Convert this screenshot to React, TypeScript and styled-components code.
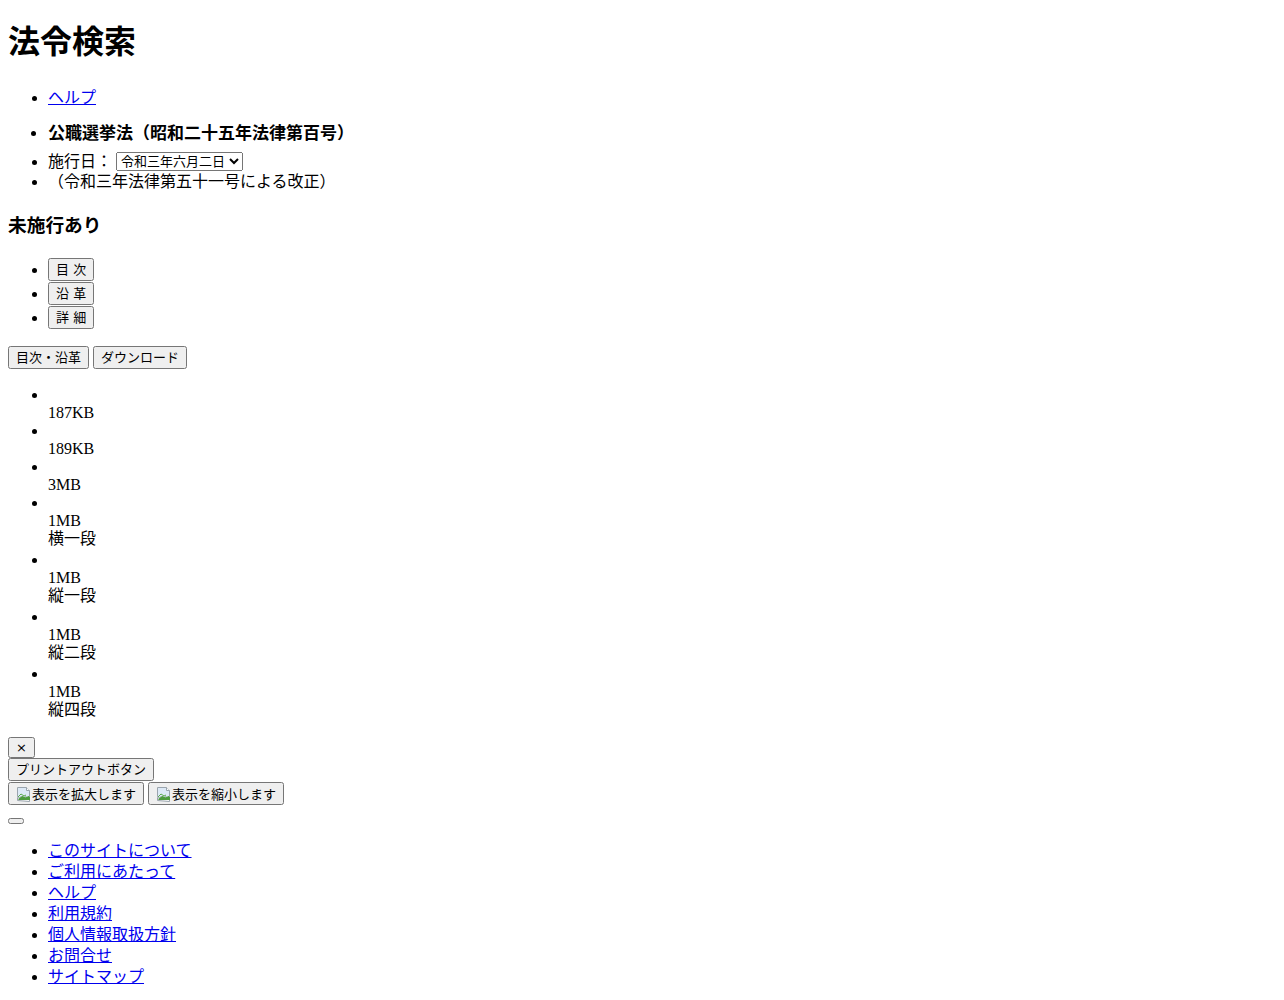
import styled, { createGlobalStyle } from "styled-components";

const GlobalStyle = createGlobalStyle`
  body {
    margin: 8px;
    background: #fff;
    color: #000;
    font-family: "Liberation Serif", "Noto Sans CJK JP", serif;
    font-size: 16px;
    line-height: 21px;
    text-spacing-trim: space-all;
  }
  button, select {
    font-family: "DejaVu Sans", "Noto Sans CJK JP", sans-serif;
    font-size: 13px;
    text-spacing-trim: space-all;
  }
`

const Title = styled.h1`
  font-size: 2em;
  line-height: 22px;
  margin: 23.44px 0 0;
`
const List = styled.ul<{ $top?: number; $bottom?: number }>`
  margin: ${(p) => p.$top ?? 16}px 0 ${(p) => p.$bottom ?? 16}px;
  padding-left: 40px;
`
const Link = styled.a`
  color: #0000ee;
  text-decoration: underline;
`
const LawName = styled.li`
  font-weight: bold;
  font-size: 17px;
  padding-top: 1px;
  margin-bottom: 7px;
`
const DateItem = styled.li`
  height: 20px;
`
const DateSelect = styled.select`
  height: 19px;
  vertical-align: middle;
  margin-bottom: 4px;
`
const Notice = styled.h3`
  font-size: 1.17em;
  line-height: 22px;
  margin: 23px 0 21px;
`
const TabItem = styled.li`
  height: 24px;
  line-height: 24px;
`
const ToolButton = styled.button<{ $height?: number }>`
  height: ${(p) => p.$height ?? 23}px;
  line-height: 15px;
  padding: 1px 6px;
  vertical-align: top;
`
const ButtonRow = styled.div<{ $height?: number; $top?: number }>`
  display: flex;
  align-items: flex-start;
  gap: 4px;
  height: ${(p) => p.$height ?? 24}px;
  margin-top: ${(p) => p.$top ?? 0}px;
`
const FileItem = styled.li`
  line-height: 18px;
`
const FileIcon = styled.a`
  display: inline-block;
  width: 0;
  height: 14px;
`
const FileLine = styled.div<{ $cjk?: boolean }>`
  line-height: ${(p) => (p.$cjk ? 17 : 18)}px;
  padding-bottom: ${(p) => (p.$cjk ? 4 : 0)}px;
`
const ZoomButton = styled.button`
  display: inline-flex;
  align-items: center;
  height: 23px;
  padding: 1px 6px;
`
const EmptyButton = styled.button`
  height: 6px;
  width: 16px;
  padding: 0;
`

const BrokenImage = () => (
  <svg width="16" height="16" viewBox="0 0 16 16">
    <path d="M1.5 1.5h9l3 3v6l-2 1-2-1-2 1.5-2-1.5-2 1-2-1z" fill="#dde9f6" stroke="#9aa4ad" />
    <path d="M10.5 1.5v3h3" fill="#fff" stroke="#9aa4ad" />
    <path d="M1.5 14.5v-3l2 1 2-1 2 1.5 2-1.5 2 1 2-1v4z" fill="#fff" stroke="#9aa4ad" />
    <path d="M2 14l1.5-2 3-2 3 1.5 3-1.5 1.5 1v3z" fill="#4c9b3c" />
    <path d="M2 11l3-3 3 2 2-1" fill="none" stroke="#5aa84a" />
  </svg>
)

const files = [
  { size: "187KB" },
  { size: "189KB" },
  { size: "3MB" },
  { size: "1MB", label: "横一段" },
  { size: "1MB", label: "縦一段" },
  { size: "1MB", label: "縦二段" },
  { size: "1MB", label: "縦四段" },
]

const footerLinks = [
  "このサイトについて",
  "ご利用にあたって",
  "ヘルプ",
  "利用規約",
  "個人情報取扱方針",
  "お問合せ",
  "サイトマップ",
]

export default function App() {
  return (
    <>
      <GlobalStyle />
      <Title>法令検索</Title>
      <List $top={34} $bottom={14}>
        <li><Link href="#">ヘルプ</Link></li>
      </List>
      <List $top={0} $bottom={0}>
        <LawName>公職選挙法（昭和二十五年法律第百号）</LawName>
        <DateItem>
          施行日：{" "}
          <DateSelect defaultValue="r3">
            <option value="r3">令和三年六月二日</option>
          </DateSelect>
        </DateItem>
        <li>（令和三年法律第五十一号による改正）</li>
      </List>
      <Notice>未施行あり</Notice>
      <List $top={21} $bottom={16}>
        <TabItem><ToolButton>目 次</ToolButton></TabItem>
        <TabItem><ToolButton>沿 革</ToolButton></TabItem>
        <TabItem><ToolButton>詳 細</ToolButton></TabItem>
      </List>
      <ButtonRow $height={23}>
        <ToolButton>目次・沿革</ToolButton>
        <ToolButton>ダウンロード</ToolButton>
      </ButtonRow>
      <List $top={17} $bottom={15}>
        {files.map((f, i) => (
          <FileItem key={i}>
            <FileLine><FileIcon href="#" aria-label={f.size} /></FileLine>
            <FileLine>{f.size}</FileLine>
            {f.label && <FileLine $cjk>{f.label}</FileLine>}
          </FileItem>
        ))}
      </List>
      <ButtonRow $height={21}>
        <ToolButton $height={21}>×</ToolButton>
      </ButtonRow>
      <ButtonRow>
        <ToolButton>プリントアウトボタン</ToolButton>
      </ButtonRow>
      <ButtonRow>
        <ZoomButton><BrokenImage />表示を拡大します</ZoomButton>
        <ZoomButton><BrokenImage />表示を縮小します</ZoomButton>
      </ButtonRow>
      <ButtonRow $height={6} $top={12}>
        <EmptyButton />
      </ButtonRow>
      <List $top={16} $bottom={16}>
        {footerLinks.map((t) => (
          <li key={t}><Link href="#">{t}</Link></li>
        ))}
      </List>
    </>
  )
}
